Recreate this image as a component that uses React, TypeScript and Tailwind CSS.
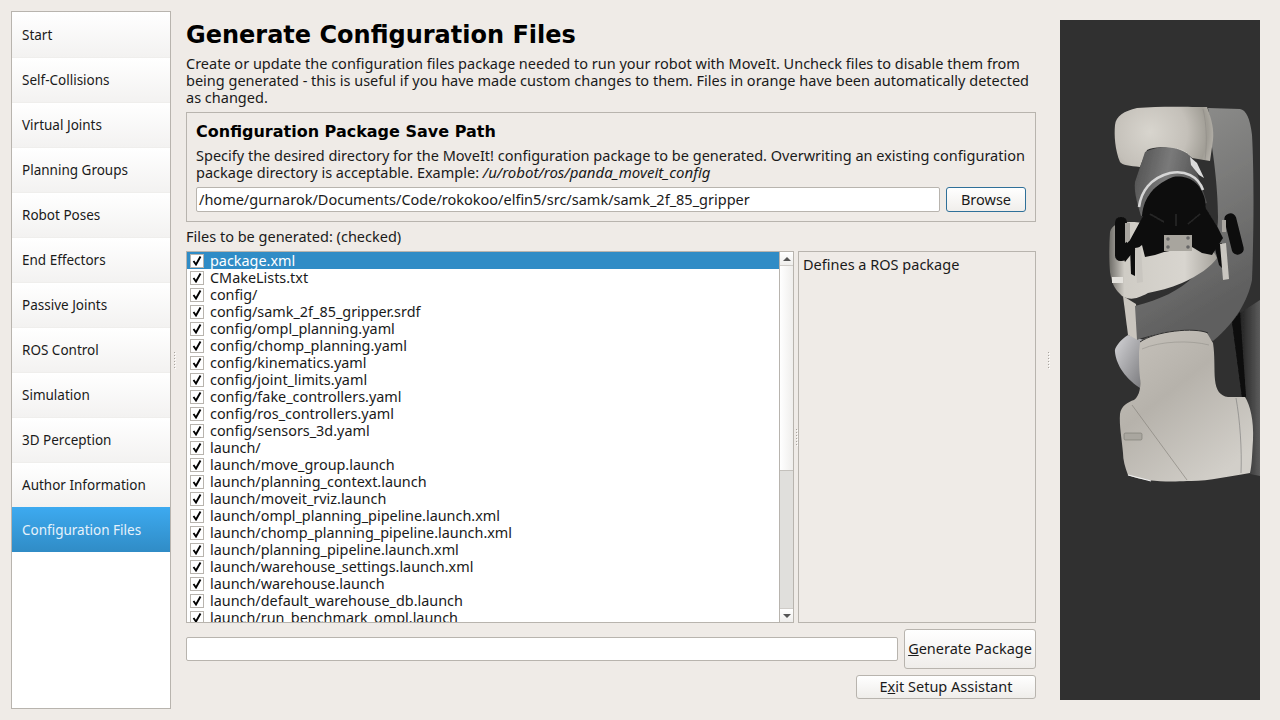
const steps = [
  "Start",
  "Self-Collisions",
  "Virtual Joints",
  "Planning Groups",
  "Robot Poses",
  "End Effectors",
  "Passive Joints",
  "ROS Control",
  "Simulation",
  "3D Perception",
  "Author Information",
  "Configuration Files",
]

const files = [
  "package.xml",
  "CMakeLists.txt",
  "config/",
  "config/samk_2f_85_gripper.srdf",
  "config/ompl_planning.yaml",
  "config/chomp_planning.yaml",
  "config/kinematics.yaml",
  "config/joint_limits.yaml",
  "config/fake_controllers.yaml",
  "config/ros_controllers.yaml",
  "config/sensors_3d.yaml",
  "launch/",
  "launch/move_group.launch",
  "launch/planning_context.launch",
  "launch/moveit_rviz.launch",
  "launch/ompl_planning_pipeline.launch.xml",
  "launch/chomp_planning_pipeline.launch.xml",
  "launch/planning_pipeline.launch.xml",
  "launch/warehouse_settings.launch.xml",
  "launch/warehouse.launch",
  "launch/default_warehouse_db.launch",
  "launch/run_benchmark_ompl.launch",
]

function Grip() {
  return (
    <div className="flex flex-col gap-[2px]">
      {[0, 1, 2, 3, 4, 5].map((n) => (
        <div key={n} className="w-[1px] h-[1px] bg-[#a8a49e] shadow-[1px_1px_0_#fff]" />
      ))}
    </div>
  )
}

function Sidebar() {
  return (
    <div className="w-[160px] h-[698px] mt-[11px] ml-[11px] shrink-0 bg-white border border-[#b8b4ae] text-[13.5px]">
      {steps.map((s, i) => {
        if (i === steps.length - 1) {
          return (
            <div
              key={s}
              className="h-[45px] pl-[10px] pt-[1px] flex items-center text-[#e6f2fb] bg-gradient-to-b from-[#3daaf0] to-[#308cc6]"
            >
              {s}
            </div>
          )
        }
        return (
          <div
            key={s}
            className={
              i === 0
                ? "h-[45px] pl-[10px] pt-[1px] flex items-center text-[#1a1a1a] bg-gradient-to-b from-white to-[#f3f2f1]"
                : "h-[45px] pl-[10px] flex items-center text-[#1a1a1a] bg-gradient-to-b from-white to-[#f3f2f1] border-t border-[#efeeec]"
            }
          >
            {s}
          </div>
        )
      })}
    </div>
  )
}

function Check() {
  return (
    <div className="w-[14px] h-[14px] shrink-0 bg-white border border-[#b8b4ae] flex items-center justify-center">
      <svg width="10" height="10" viewBox="0 0 10 10">
        <path d="M1.5 5 L4 8.5 L8.5 0.5" fill="none" stroke="#000" strokeWidth="1.9" />
      </svg>
    </div>
  )
}

function Scrollbar() {
  return (
    <div className="w-[14px] shrink-0 h-full flex flex-col border-l border-[#b8b4ae] bg-[#e0dfdc]">
      <div className="h-[14px] bg-gradient-to-b from-white to-[#efeeec] border-b border-[#cfccc8] flex items-center justify-center">
        <div className="w-0 h-0 border-x-[4px] border-x-transparent border-b-[4px] border-b-[#555]" />
      </div>
      <div className="h-[205px] bg-gradient-to-r from-white to-[#efeeec] border-b border-[#c4c1bc]" />
      <div className="flex-1" />
      <div className="h-[14px] bg-gradient-to-b from-white to-[#efeeec] border-t border-[#cfccc8] flex items-center justify-center">
        <div className="w-0 h-0 border-x-[4px] border-x-transparent border-t-[4px] border-t-[#555]" />
      </div>
    </div>
  )
}

function FileList() {
  return (
    <div className="w-[608px] h-[372px] shrink-0 flex bg-white border border-[#b8b4ae] text-[14.4px]">
      <div className="flex-1 overflow-hidden">
        {files.map((f, i) => (
          <div
            key={f}
            className={
              i === 0
                ? "h-[17px] pl-[3px] flex items-center gap-[6px] bg-[#308cc6] text-white"
                : "h-[17px] pl-[3px] flex items-center gap-[6px] text-[#1a1a1a]"
            }
          >
            <Check />
            <span className="whitespace-nowrap">{f}</span>
          </div>
        ))}
      </div>
      <Scrollbar />
    </div>
  )
}

function Robot() {
  return (
    <svg viewBox="1060 20 200 680" className="w-full h-full block">
      <defs>
        <linearGradient id="arm" x1="0" y1="0" x2="0.3" y2="1">
          <stop offset="0" stopColor="#939391" />
          <stop offset="0.55" stopColor="#777776" />
          <stop offset="1" stopColor="#5e5e5e" />
        </linearGradient>
        <linearGradient id="cyl" x1="0" y1="0" x2="1" y2="0.2">
          <stop offset="0" stopColor="#4e4e4e" />
          <stop offset="0.5" stopColor="#7a7a7a" />
          <stop offset="1" stopColor="#4e4e4e" />
        </linearGradient>
        <radialGradient id="elbow" gradientUnits="userSpaceOnUse" cx="1150" cy="132" r="68">
          <stop offset="0" stopColor="#d8d5ce" />
          <stop offset="0.55" stopColor="#c4c0b9" />
          <stop offset="0.85" stopColor="#a09d95" />
          <stop offset="1" stopColor="#bdb9b2" />
        </radialGradient>
        <linearGradient id="low" x1="0" y1="0" x2="0.7" y2="1">
          <stop offset="0" stopColor="#c7c3bc" />
          <stop offset="0.45" stopColor="#b6b2ab" />
          <stop offset="1" stopColor="#d2cfc9" />
        </linearGradient>
        <linearGradient id="disc" x1="0" y1="0" x2="1" y2="0">
          <stop offset="0" stopColor="#6e6c67" />
          <stop offset="0.14" stopColor="#cfccc5" />
          <stop offset="0.7" stopColor="#d8d5cf" />
          <stop offset="1" stopColor="#a5a29b" />
        </linearGradient>
        <linearGradient id="bulb" x1="0" y1="0" x2="1" y2="1">
          <stop offset="0" stopColor="#d5d5d8" />
          <stop offset="1" stopColor="#77777a" />
        </linearGradient>
        <linearGradient id="backfade" x1="0" y1="0" x2="1" y2="0">
          <stop offset="0" stopColor="#222" />
          <stop offset="1" stopColor="#5c5c5c" />
        </linearGradient>
        <filter id="soft" x="-5%" y="-5%" width="110%" height="110%">
          <feGaussianBlur stdDeviation="0.5" />
        </filter>
      </defs>

      <g filter="url(#soft)">
        {/* far link behind the lower joint */}
        <path d="M1240 313 L1260 300 L1260 476 L1250 474 L1245 397 Z" fill="url(#backfade)" />
        <path d="M1232 322 L1240 312 L1246 397 L1242 398 Z" fill="#0a0a0a" />

        {/* silver bulb and neck */}
        <path d="M1128 335 C1120 340 1114 348 1115 352 C1116 362 1122 376 1140 388 L1144 340 Z" fill="url(#bulb)" />
        <path d="M1123 296 L1136 304 L1138 340 L1128 335 Z" fill="#c9c5be" />

        {/* big grey forearm */}
        <path
          d="M1208 108 L1240 109 C1246 110 1250 118 1252 135 C1254 170 1254 230 1252 280 C1248 300 1236 322 1213 341 C1200 332 1160 330 1137 340 L1135 306 C1160 300 1180 290 1193 277 C1208 262 1218 240 1218 217 C1218 190 1214 160 1212 147 C1212 130 1210 118 1208 108 Z"
          fill="url(#arm)"
        />

        {/* cream disc under the gripper */}
        <path
          d="M1110 232 C1113 222 1125 220 1150 224 C1180 230 1210 240 1217 258 C1212 266 1198 276 1182 283 C1170 288 1158 291 1148 293 C1135 300 1130 300 1122 296 C1116 290 1112 286 1110 272 C1109 260 1109 245 1110 232 Z"
          fill="url(#disc)"
        />
        <rect x="1112" y="277" width="11" height="6" fill="#e4e2dd" />

        {/* elbow */}
        <path
          d="M1115 125 C1116 116 1124 111 1137 108 C1160 106 1190 107 1207 107 C1212 120 1214 130 1213 140 L1210 161 L1192 158 C1185 150 1160 143 1147 150 L1140 167 C1130 166 1122 165 1120 162 C1115 150 1114 135 1115 125 Z"
          fill="url(#elbow)"
        />
        <path d="M1203 109 C1207 125 1207 145 1205 160" fill="none" stroke="#8d8a84" strokeWidth="0.6" />
        <path d="M1141 162 C1150 148 1180 142 1191 157" fill="none" stroke="#e4e2dd" strokeWidth="0.7" strokeDasharray="1 1" />

        {/* cylinder */}
        <path d="M1145 152 C1160 144 1182 146 1192 158 L1207 203 L1141 216 C1136 200 1134 190 1135 182 Z" fill="url(#cyl)" />
        <path d="M1190 157 L1197 163 L1204 178 L1199 175 L1191 165 Z" fill="#dcdcdc" />

        {/* white ring, black flange */}
        <path d="M1139 207 C1141 192 1150 178 1170 173 C1185 170 1198 176 1203 190" fill="none" stroke="#d6d6d6" strokeWidth="2.6" />
        <path d="M1142 216 C1143 202 1150 186 1173 177 C1186 175 1200 180 1205 200 C1206 206 1205 212 1204 218 Z" fill="#0b0b0b" />

        {/* gripper body */}
        <path
          d="M1142 218 L1148 208 L1205 207 L1218 228 L1223 238 L1212 255 L1202 253 L1192 247 L1164 252 L1155 255 L1145 257 L1142 245 L1133 252 L1125 262 L1120 250 L1130 240 Z"
          fill="#0e0e0e"
        />
        <path d="M1130 248 L1135 248 L1135 276 L1131 274 Z" fill="#0e0e0e" />
        <path d="M1214 245 L1222 243 L1222 268 L1219 265 Z" fill="#0e0e0e" />
        <path d="M1150 214 L1164 222 M1176 214 L1176 226 M1200 214 L1188 224" stroke="#262626" strokeWidth="1.6" />

        {/* centre plate */}
        <rect x="1164" y="235" width="28" height="16" fill="#a8a59e" />

        {/* fingers */}
        <rect x="1115" y="217" width="12" height="44" rx="5.5" fill="#0d0d0d" />
        <rect x="1228" y="213" width="12" height="42" rx="5.5" fill="#0d0d0d" transform="rotate(-14 1234 234)" />
        <path d="M1125 223 L1130 223 L1130 240 L1125 243 Z" fill="#a8a59f" />
        <path d="M1222 220 L1226 220 L1226 232 L1222 232 Z" fill="#a8a59f" />
        <path d="M1135 248 L1141 247 L1143 282 L1137 283 Z" fill="#c9c6c0" />
        <path d="M1220 244 L1226 243 L1229 279 L1223 280 Z" fill="#c9c6c0" />

        {/* lower joint */}
        <path
          d="M1140 342 C1150 332 1195 326 1207 333 L1213 343 C1215 355 1214 370 1215 380 C1216 390 1220 396 1228 397 L1245 397 C1250 405 1254 420 1253 440 C1252 455 1252 465 1250 473 C1230 476 1205 482 1187 481 C1170 482 1145 482 1128 475 C1125 467 1123 460 1123 453 C1122 440 1119 425 1120 414 C1121 406 1128 402 1134 400 C1140 396 1141 385 1140 378 C1139 370 1139 360 1139 352 Z"
          fill="url(#low)"
        />
      </g>

      {/* crisp seams and screws on top of the softened shapes */}
      <circle cx="1168" cy="239" r="1.8" fill="#666" />
      <circle cx="1188" cy="238" r="1.8" fill="#666" />
      <circle cx="1168" cy="247" r="1.8" fill="#666" />
      <circle cx="1188" cy="247" r="1.8" fill="#666" />
      <path d="M1140 342 C1155 331 1195 327 1208 333" fill="none" stroke="#2f2f2f" strokeWidth="1" />
      <path d="M1142 349 C1160 341 1190 340 1209 345" fill="none" stroke="#8d8a84" strokeWidth="0.5" />
      <path d="M1132 405 L1187 480" fill="none" stroke="#7f7c76" strokeWidth="0.6" />
      <path d="M1236 398 C1240 420 1242 450 1241 473" fill="none" stroke="#777" strokeWidth="0.6" />
      <rect x="1124" y="433" width="18" height="7" rx="1.5" fill="#a9a69f" stroke="#6e6c66" strokeWidth="0.5" />
      <path d="M1128 475 L1151 481" stroke="#f2f2f2" strokeWidth="1.2" />
    </svg>
  )
}

export default function App() {
  return (
    <div
      className="w-[1280px] h-[720px] overflow-hidden flex bg-[#efebe7] text-[14.5px] leading-[17px] text-[#1a1a1a]"
      style={{ fontFamily: '"Noto Sans", sans-serif' }}
    >
      <Sidebar />
      <div className="w-[15px] shrink-0 flex items-center pl-[3px]">
        <Grip />
      </div>

      <div className="w-[850px] shrink-0 flex flex-col">
        <h1 className="mt-[20px] h-[30px] leading-[30px] text-[24px] font-bold text-black font-['DejaVu_Sans'] whitespace-nowrap">
          Generate Configuration Files
        </h1>
        <p className="mt-[5px] whitespace-nowrap">
          Create or update the configuration files package needed to run your robot with MoveIt. Uncheck files to disable them from
          <br />
          being generated - this is useful if you have made custom changes to them. Files in orange have been automatically detected
          <br />
          as changed.
        </p>

        <div className="mt-[6px] h-[110px] border border-[#b8b4ae] px-[9px]">
          <div className="mt-[9px] h-[20px] leading-[20px] text-[16px] font-bold text-black font-['DejaVu_Sans'] whitespace-nowrap">
            Configuration Package Save Path
          </div>
          <p className="mt-[5px] whitespace-nowrap">
            Specify the desired directory for the MoveIt! configuration package to be generated. Overwriting an existing configuration
            <br />
            package directory is acceptable. Example: <i className="text-[15px]">/u/robot/ros/panda_moveit_config</i>
          </p>
          <div className="mt-[6px] flex justify-between">
            <div className="w-[744px] h-[25px] pl-[2px] flex items-center bg-white border border-[#b8b4ae] rounded-[2px] whitespace-nowrap">
              /home/gurnarok/Documents/Code/rokokoo/elfin5/src/samk/samk_2f_85_gripper
            </div>
            <button className="w-[80px] h-[25px] rounded-[3px] border border-[#2f7099] bg-gradient-to-b from-white to-[#f0eeeb]">
              Browse
            </button>
          </div>
        </div>

        <div className="mt-[6px] h-[17px]">Files to be generated: (checked)</div>

        <div className="mt-[6px] flex">
          <FileList />
          <div className="w-[4px] shrink-0 flex items-center justify-center">
            <Grip />
          </div>
          <div className="flex-1 border border-[#b8b4ae] pl-[4px] pt-[4px]">Defines a ROS package</div>
        </div>

        <div className="mt-[6px] flex justify-between items-center">
          <div className="w-[712px] h-[24px] bg-white border border-[#b8b4ae] rounded-[2px]" />
          <button className="w-[132px] h-[40px] pb-[1px] rounded-[3px] border border-[#b8b4ae] bg-gradient-to-b from-white to-[#efedea] whitespace-nowrap">
            <span className="underline">G</span>enerate Package
          </button>
        </div>
        <div className="mt-[6px] flex justify-end">
          <button className="w-[180px] h-[24px] pb-[1px] rounded-[3px] border border-[#b8b4ae] bg-gradient-to-b from-white to-[#efedea]">
            E<span className="underline">x</span>it Setup Assistant
          </button>
        </div>
      </div>

      <div className="w-[24px] shrink-0 flex items-center justify-center">
        <Grip />
      </div>
      <div className="w-[200px] h-[680px] mt-[20px] shrink-0 bg-[#303030]">
        <Robot />
      </div>
    </div>
  )
}
